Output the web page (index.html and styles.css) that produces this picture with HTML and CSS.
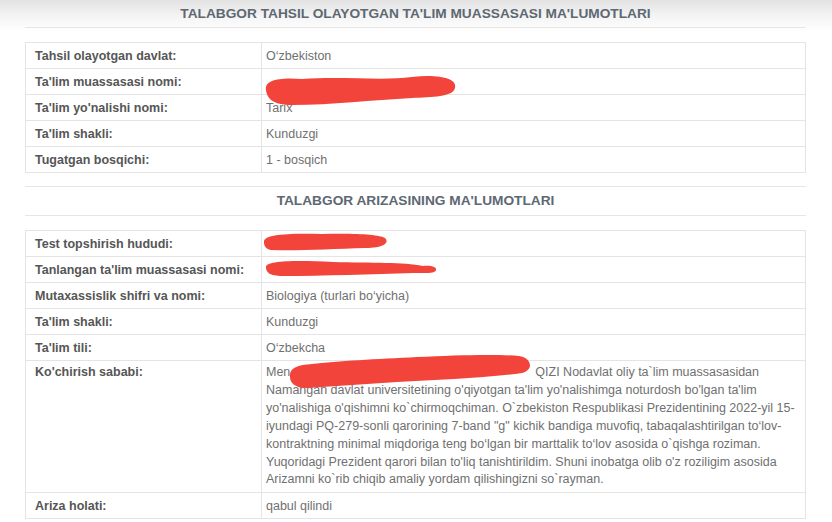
FILE: index.html
```html
<!DOCTYPE html>
<html lang="uz">
<head>
<meta charset="utf-8">
<title>Talabgor ma'lumotlari</title>
<link rel="stylesheet" href="styles.css">
</head>
<body>
<div class="page">
  <h2 class="section-title first">TALABGOR TAHSIL OLAYOTGAN TA'LIM MUASSASASI MA'LUMOTLARI</h2>
  <table class="info">
    <tr><th>Tahsil olayotgan davlat:</th><td>O‘zbekiston</td></tr>
    <tr><th>Ta'lim muassasasi nomi:</th><td class="redacted">
      <svg class="blob blob-1" width="200" height="36" viewBox="0 0 200 36"><path d="M4,19 C2,9 18,6 40,8 C80,5 120,10 150,6 C175,3 196,7 193,17 C191,26 170,26 150,27 C110,29 70,34 30,34 C10,34 5,27 4,19 Z"/></svg>
    </td></tr>
    <tr><th>Ta'lim yo'nalishi nomi:</th><td>Tarix</td></tr>
    <tr><th>Ta'lim shakli:</th><td>Kunduzgi</td></tr>
    <tr><th>Tugatgan bosqichi:</th><td>1 - bosqich</td></tr>
  </table>

  <h2 class="section-title second">TALABGOR ARIZASINING MA'LUMOTLARI</h2>
  <table class="info">
    <tr><th>Test topshirish hududi:</th><td class="redacted">
      <svg class="blob blob-2" width="130" height="22" viewBox="0 0 130 22"><path d="M3,11 C2,3 30,2 60,3 C90,2 118,3 124,7 C129,12 122,17 104,17 C72,18 34,20 10,19 C4,18 3,14 3,11 Z"/></svg>
    </td></tr>
    <tr><th>Tanlangan ta'lim muassasasi nomi:</th><td class="redacted">
      <svg class="blob blob-3" width="176" height="20" viewBox="0 0 176 20"><path d="M3,9 C3,3 30,2 70,4 C110,5 140,4 160,8 C168,7 174,9 173,12 C172,16 162,15 150,15 C110,16 60,18 20,18 C6,18 3,14 3,9 Z"/></svg>
    </td></tr>
    <tr><th>Mutaxassislik shifri va nomi:</th><td>Biologiya (turlari bo‘yicha)</td></tr>
    <tr><th>Ta'lim shakli:</th><td>Kunduzgi</td></tr>
    <tr><th>Ta'lim tili:</th><td>O‘zbekcha</td></tr>
    <tr class="long"><th>Ko'chirish sababi:</th><td class="redacted">Men<span class="hidden-name"></span>QIZI Nodavlat oliy ta`lim muassasasidan<br>Namangan davlat universitetining o'qiyotgan ta'lim yo'nalishimga noturdosh bo'lgan ta'lim<br>yo'nalishiga o'qishimni ko`chirmoqchiman. O`zbekiston Respublikasi Prezidentining 2022-yil 15-<br>iyundagi PQ-279-sonli qarorining 7-band "g" kichik bandiga muvofiq, tabaqalashtirilgan to‘lov-<br>kontraktning minimal miqdoriga teng bo‘lgan bir marttalik to‘lov asosida o`qishga roziman.<br>Yuqoridagi Prezident qarori bilan to'liq tanishtirildim. Shuni inobatga olib o'z roziligim asosida<br>Arizamni ko`rib chiqib amaliy yordam qilishingizni so`rayman.
      <svg class="blob blob-4" width="248" height="38" viewBox="0 0 248 38"><path d="M3,25 C2,16 10,13 25,12 C50,9 90,7 130,5 C170,3 210,2 232,4 C245,6 247,18 235,21 C200,26 150,28 110,30 C80,32 50,34 20,36 C8,36 3,31 3,25 Z"/></svg>
    </td></tr>
    <tr><th>Ariza holati:</th><td>qabul qilindi</td></tr>
  </table>
</div>
</body>
</html>
```

FILE: styles.css
```css
html, body {
  margin: 0;
  padding: 0;
}

body {
  background: linear-gradient(to bottom, #e2e2e2 0px, #f4f4f4 16px, #ffffff 32px) no-repeat;
  background-color: #ffffff;
  font-family: "Liberation Sans", Arial, sans-serif;
  font-size: 12.5px;
  color: #666;
}

.page {
  width: 781px;
  margin-left: 25px;
}

.section-title {
  margin: 0;
  text-align: center;
  font-size: 13.7px;
  font-weight: bold;
  color: #5d6872;
  line-height: 18px;
  border-bottom: 1px solid #e6e6e6;
}

.section-title.first {
  padding: 5px 0 4px;
  margin-bottom: 14px;
}

.section-title.second {
  border-top: 1px solid #e6e6e6;
  padding: 5px 0 5px;
  margin-top: 13px;
  margin-bottom: 14px;
}

.info {
  width: 781px;
  border-collapse: collapse;
  table-layout: fixed;
  border: 1px solid #e2e2e2;
}

.info th,
.info td {
  border: 1px solid #e4e4e4;
  line-height: 18px;
  padding: 4px 4px 3px;
  vertical-align: top;
  text-align: left;
  font-size: 12.5px;
}

.info th {
  width: 222px;
  padding-left: 9px;
  font-weight: bold;
  color: #565656;
}

.info td {
  color: #707070;
  white-space: nowrap;
}

.info .long th,
.info .long td {
  padding-top: 3px;
  padding-bottom: 3px;
  line-height: 17.9px;
}

.redacted {
  position: relative;
}

.hidden-name {
  display: inline-block;
  width: 245px;
}

.blob {
  position: absolute;
  fill: #f2443a;
}

.blob-1 {
  left: 0;
  top: 2px;
}

.blob-2 {
  left: -1px;
  top: 0;
}

.blob-3 {
  left: 1px;
  top: 1px;
}

.blob-4 {
  left: 25px;
  top: -9px;
}
```
